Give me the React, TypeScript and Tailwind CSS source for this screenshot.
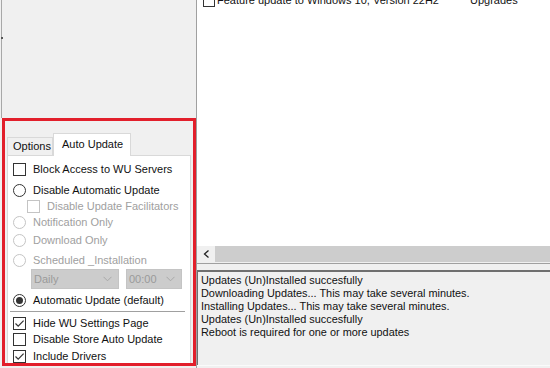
import React from 'react';

const ui = { fontFamily: '"Liberation Sans", Arial, sans-serif' };

function CheckBox({ checked = false, disabled = false }: { checked?: boolean; disabled?: boolean }) {
  return (
    <span
      className={`flex h-[13px] w-[13px] shrink-0 items-center justify-center border bg-white ${
        disabled ? 'border-[#c4c4c4]' : 'border-[#333333]'
      }`}
    >
      {checked && (
        <svg width="11" height="11" viewBox="0 0 11 11">
          <path d="M1.5 5.5 L4.2 8.2 L9.6 2.6" fill="none" stroke="#333" strokeWidth="1.2" />
        </svg>
      )}
    </span>
  );
}

function Radio({ checked = false, disabled = false }: { checked?: boolean; disabled?: boolean }) {
  return (
    <span
      className={`flex h-[13px] w-[13px] shrink-0 items-center justify-center rounded-full border bg-white ${
        disabled ? 'border-[#c4c4c4]' : 'border-[#333333]'
      }`}
    >
      {checked && <span className="h-[7px] w-[7px] rounded-full bg-[#333333]" />}
    </span>
  );
}

function Row({
  children,
  label,
  disabled = false,
  className = '',
}: {
  children: React.ReactNode;
  label: string;
  disabled?: boolean;
  className?: string;
}) {
  return (
    <div className={`flex h-[16px] items-center gap-[7px] ${className}`}>
      {children}
      <span className={disabled ? 'text-[#a0a0a0]' : 'text-[#111]'}>{label}</span>
    </div>
  );
}

function Combo({ value, className }: { value: string; className: string }) {
  return (
    <div
      className={`flex h-[20px] items-center justify-between border border-[#c4c4c4] bg-[#cccccc] pl-[2px] pr-[6px] text-[#9a9a9a] ${className}`}
    >
      <span>{value}</span>
      <svg width="9" height="6" viewBox="0 0 9 6">
        <path d="M0.5 0.8 L4.5 4.8 L8.5 0.8" fill="none" stroke="#a8a8a8" strokeWidth="1" />
      </svg>
    </div>
  );
}

export default function App() {
  const log = [
    'Updates (Un)Installed succesfully',
    'Downloading Updates... This may take several minutes.',
    'Installing Updates... This may take several minutes.',
    'Updates (Un)Installed succesfully',
    'Reboot is required for one or more updates',
  ];

  return (
    <div className="flex h-[368px] w-[550px] overflow-hidden bg-[#f0f0f0] text-[11px]" style={ui}>
      {/* left panel */}
      <div className="flex w-[197px] shrink-0 flex-col border-r border-[#a0a0a0]">
        <div className="ml-[1px] h-[118px] border-l border-[#a8a8a8]">
          <div className="-ml-[1px] mt-[37px] h-[2px] w-[2px] bg-[#555]" />
        </div>
        <div className="ml-[2px] h-[248px] w-[194px] overflow-hidden border-[3px] border-[#e21f2b]">
          {/* tabs */}
          <div className="ml-[2px] mt-[11px] flex items-end">
            <div className="flex h-[18px] w-[46px] items-center border border-b-0 border-[#d9d9d9] bg-[#f0f0f0] pl-[5px] text-[#111]">
              Options
            </div>
            <div className="relative top-[1px] flex h-[23px] w-[78px] items-center border border-b-0 border-[#d9d9d9] bg-white pb-[2px] pl-[8px] text-[#111]">
              Auto Update
            </div>
          </div>
          <div className="ml-[2px] h-[212px] w-[184px] border border-[#d9d9d9] bg-white pl-[5px] pt-[5px]">
            <Row label="Block Access to WU Servers">
              <CheckBox />
            </Row>
            <Row label="Disable Automatic Update" className="mt-[5px]">
              <Radio />
            </Row>
            <Row label="Disable Update Facilitators" disabled className="ml-[14px] gap-[5px]">
              <CheckBox disabled />
            </Row>
            <Row label="Notification Only" disabled>
              <Radio disabled />
            </Row>
            <Row label="Download Only" disabled className="mt-[2px]">
              <Radio disabled />
            </Row>
            <Row label="Scheduled _Installation" disabled className="mt-[4px]">
              <Radio disabled />
            </Row>
            <div className="mt-[1px] flex gap-[7px] pl-[18px]">
              <Combo value="Daily" className="w-[88px]" />
              <Combo value="00:00" className="w-[56px]" />
            </div>
            <Row label="Automatic Update (default)" className="mt-[3px]">
              <Radio checked />
            </Row>
            <div className="-ml-[3px] mt-[3px] w-[175px] border-t border-[#a0a0a0]" />
            <Row label="Hide WU Settings Page" className="mt-[3px]">
              <CheckBox checked />
            </Row>
            <Row label="Disable Store Auto Update">
              <CheckBox />
            </Row>
            <Row label="Include Drivers" className="mt-[1px]">
              <CheckBox checked />
            </Row>
          </div>
        </div>
      </div>

      {/* right panel */}
      <div className="flex min-w-0 flex-1 flex-col">
        <div className="h-[246px] bg-white">
          <div className="-mt-[6px] flex h-[13px] items-center pl-[6px] text-[#111]">
            <span className="h-[13px] w-[12px] border border-[#333]" />
            <span className="ml-[2px] w-[253px]">Feature update to Windows 10, Version 22H2</span>
            <span>Upgrades</span>
          </div>
        </div>
        <div className="flex h-[16px]">
          <div className="flex w-[18px] items-center justify-center bg-[#f0f0f0]">
            <svg width="7" height="8" viewBox="0 0 7 8">
              <path d="M5.5 0.5 L1.5 4 L5.5 7.5" fill="none" stroke="#222" strokeWidth="1.3" />
            </svg>
          </div>
          <div className="flex-1 bg-[#cdcdcd]" />
        </div>
        <div className="mt-[1px] border-t border-[#a0a0a0]" />
        <div className="mt-[6px] flex-1 border-t-2 border-l border-[#6f6f6f] pl-[3px] pt-[2px] text-[10.9px] leading-[13px] text-[#111]">
          {log.map((line, i) => (
            <div key={i}>{line}</div>
          ))}
        </div>
        <div className="h-[3px] border-t border-[#fafafa]" />
      </div>
    </div>
  );
}
